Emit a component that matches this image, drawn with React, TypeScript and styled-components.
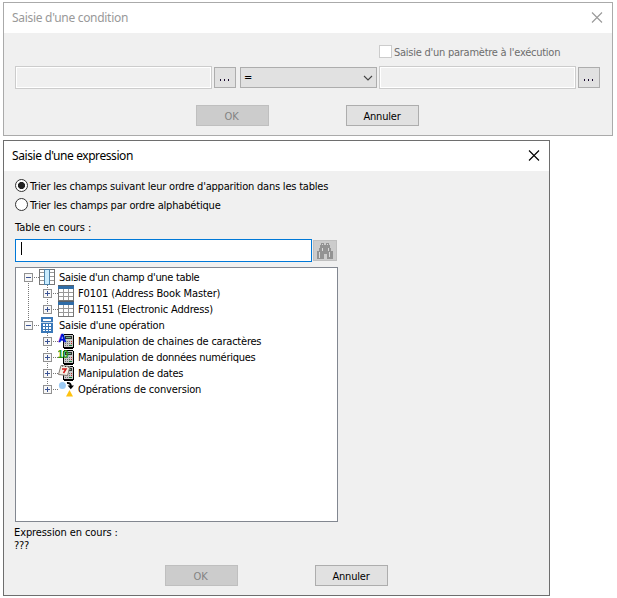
import React from 'react';
import styled, { createGlobalStyle, css } from 'styled-components';

const GlobalStyle = createGlobalStyle`
  body {
    margin: 0;
    background: #fff;
    overflow: hidden;
    font: 11px/13px 'DejaVu Sans Condensed', 'DejaVu Sans', sans-serif;
    color: #000;
  }
  * { box-sizing: border-box; }
`;

const Desktop = styled.main`
  display: flex;
  flex-direction: column;
  align-items: flex-start;
  gap: 4px;
  padding: 2px 0 0 3px;
  width: 617px;
  height: 598px;
`;

const Dialog = styled.section<{ $width: number; $height: number; $inactive?: boolean }>`
  display: flex;
  flex-direction: column;
  width: ${p => p.$width}px;
  height: ${p => p.$height}px;
  background: #f0f0f0;
  border: 1px solid ${p => (p.$inactive ? '#aaa' : '#6e6e6e')};
`;

const TitleBar = styled.header<{ $inactive?: boolean }>`
  display: flex;
  flex: none;
  align-items: center;
  justify-content: space-between;
  height: 30px;
  padding: 0 9px 0 8px;
  background: #fff;
  color: ${p => (p.$inactive ? '#999' : '#000')};
  font: 12px/16px 'Noto Sans', 'Open Sans', sans-serif;
`;

const Text = styled.span<{ $track?: number }>`
  letter-spacing: ${p => p.$track ?? -0.2}px;
  white-space: pre;
`;

const ConditionBody = styled.div`
  display: flex;
  flex-direction: column;
  padding: 12px 0 0 11px;
`;

const OptionText = styled(Text)`
  padding-top: 1px;
`;

const ParameterOption = styled.label`
  display: flex;
  align-items: center;
  gap: 2px;
  margin-left: 364px;
  height: 13px;
  color: #6d6d6d;
`;

const CheckBox = styled.span`
  width: 13px;
  height: 13px;
  border: 1px solid #ccc;
  background: #fff;
`;

const CriteriaRow = styled.div`
  display: grid;
  grid-template-columns: 197px 22px 139px 197px 22px;
  column-gap: 2px;
  align-items: center;
  margin-top: 8px;
  height: 23px;
`;

const DisabledInput = styled.div`
  height: 23px;
  border: 1px solid #ccc;
  box-shadow: inset 0 0 0 1px #fff;
`;

const surface = css`
  border: 1px solid #adadad;
  background: #e1e1e1;
`;

const DotsButton = styled.button`
  ${surface}
  display: flex;
  align-items: center;
  justify-content: center;
  height: 21px;
  padding: 0;
`;

const Select = styled.div`
  ${surface}
  display: flex;
  align-items: center;
  justify-content: space-between;
  height: 21px;
  margin-left: 2px;
  padding: 0 3px;
`;

const Actions = styled.div<{ $left: number; $top: number }>`
  display: flex;
  gap: 77px;
  margin: ${p => p.$top}px 0 0 ${p => p.$left}px;
`;

const PushButton = styled.button`
  ${surface}
  width: 73px;
  height: 21px;
  padding: 2px 1px 0 0;
  font: inherit;
  color: #000;
  &:disabled {
    background: #ccc;
    border-color: #bfbfbf;
    color: #838383;
    padding-right: 2px;
  }
`;

const ExpressionBody = styled.div`
  display: flex;
  flex-direction: column;
  padding: 8px 0 0 11px;
`;

const RadioOption = styled.label`
  display: flex;
  align-items: center;
  gap: 2px;
  height: 13px;
  margin-bottom: 6px;
`;

const RadioMark = styled.span<{ $checked?: boolean }>`
  width: 13px;
  height: 13px;
  border: 1px solid #333;
  border-radius: 50%;
  background: ${p => (p.$checked ? 'radial-gradient(circle, #222 0 3.2px, #fff 3.9px)' : '#fff')};
`;

const FieldLabel = styled.div`
  margin: 4px 0 0;
  height: 18px;
`;

const SearchRow = styled.div`
  display: flex;
  align-items: center;
  gap: 1px;
  height: 23px;
`;

const ActiveInput = styled.div`
  display: flex;
  width: 297px;
  height: 23px;
  padding: 2px 5px;
  border: 1px solid #0078d7;
  background: #fff;
`;

const Caret = styled.span`
  width: 1px;
  height: 13px;
  background: #000;
`;

const SearchButton = styled.button`
  display: flex;
  align-items: center;
  justify-content: center;
  width: 24px;
  height: 21px;
  padding: 0;
  border: 1px solid #bfbfbf;
  background: #ccc;
`;

const Tree = styled.ul`
  width: 323px;
  height: 255px;
  margin: 5px 0 0;
  padding: 1px 0 0;
  border: 1px solid #828790;
  background: #fff;
  list-style: none;
`;

const TreeRow = styled.li`
  display: flex;
  align-items: center;
  height: 16px;
  svg { display: block; flex: none; }
`;

const TreeLabel = styled(Text)`
  margin-left: 4px;
`;

const Summary = styled.div`
  margin: 4px 0 0 -1px;
  line-height: 13px;
`;

const CloseIcon = ({ color }: { color: string }) => (
  <svg width="12" height="12" viewBox="0 0 12 12">
    <path d="M1 0.5L11 10.5M11 0.5L1 10.5" stroke={color} strokeWidth="1.1" fill="none" />
  </svg>
);

const DotsIcon = () => (
  <svg width="12" height="8" shapeRendering="crispEdges" fill="#1a0a30">
    <rect x="1" y="5" width="1" height="2" />
    <rect x="5" y="5" width="1" height="2" />
    <rect x="9" y="5" width="1" height="2" />
  </svg>
);

const ChevronIcon = () => (
  <svg width="10" height="6" viewBox="0 0 10 6">
    <path d="M1 1L5 5L9 1" fill="none" stroke="#444" strokeWidth="1.1" />
  </svg>
);

const BinocularsIcon = () => (
  <svg width="16" height="16" shapeRendering="crispEdges">
    <path
      fill="#939393"
      d="M4 0h3v2h2V0h3v2h1v3h1v3h2v8h-6v-5H7v5H0V8h2V5h1V2h1z"
    />
    <path fill="#d8d8d8" d="M5 1h1v1H5zM10 1h1v1h-1zM5 5h1v3H5zM11 5h1v3h-1zM2 9h1v6H2zM12 9h1v5h-1z" />
    <path fill="#ccc" d="M7 11h2v5H7z" />
  </svg>
);

const TableIcon = () => (
  <svg width="16" height="16" shapeRendering="crispEdges">
    <path fill="#fff" d="M0 0h16v16H0z" />
    <path fill="#777" d="M0 0h1v16H0zM15 0h1v16h-1zM0 15h16v1H0z" />
    <path fill="#999" d="M1 7h14v1H1zM1 11h14v1H1zM5 4h1v11H5zM10 4h1v11h-1z" />
    <path fill="#2f6da8" d="M0 0h16v4H0z" />
    <path fill="#555f6a" d="M0 0h16v1H0z" />
  </svg>
);

const ColumnIcon = () => (
  <svg width="16" height="16" shapeRendering="crispEdges">
    <path fill="#fff" d="M0 0h16v16H0z" />
    <path fill="#777" d="M0 0h16v1H0zM0 15h16v1H0zM0 0h1v16H0zM15 0h1v16h-1z" />
    <path fill="#999" d="M1 3h14v1H1zM1 7h14v1H1zM1 11h14v1H1z" />
    <path fill="#c8ecff" d="M5 1h6v14H5z" />
    <path fill="#4f83aa" d="M5 0h1v16H5zM10 0h1v16h-1zM5 0h6v1H5zM5 15h6v1H5z" />
  </svg>
);

const CalculatorIcon = () => (
  <svg width="16" height="16" shapeRendering="crispEdges">
    <path fill="#3a78b8" d="M2 0h12v16H2z" />
    <path fill="#fff" d="M4 2h8v2H4zM4 7h2v2H4zM7 7h2v2H7zM10 7h2v2h-2zM4 10h2v2H4zM7 10h2v2H7zM10 10h2v2h-2zM4 13h2v1H4zM7 13h2v1H7zM10 13h2v1h-2z" />
    <path fill="#c5d8ea" d="M2 5h12v1H2z" />
  </svg>
);

const PocketCalculator = () => (
  <g shapeRendering="crispEdges">
    <path fill="#000" d="M6 1h9v1h1v13h-1v1H6v-1H5V2h1z" />
    <path fill="#c9c9c9" d="M6 2h9v12H6z" />
    <path fill="#333" d="M7 3h7v3H7z" />
    <path fill="#6fae88" d="M8 4h5v1H8z" />
    <path fill="#707070" d="M7 8h1v1H7zM9 8h1v1H9zM11 8h1v1h-1zM7 10h1v1H7zM9 10h1v1H9zM11 10h1v1h-1zM7 12h1v1H7zM9 12h1v1H9z" />
    <path fill="#b72525" d="M13 8h1v1h-1zM13 10h1v1h-1z" />
    <path fill="#1c7a3a" d="M11 12h3v1h-3z" />
  </g>
);

const TextFunctionIcon = () => (
  <svg width="16" height="16">
    <PocketCalculator />
    <text x="0.3" y="9" fontFamily="Liberation Sans" fontSize="11" fontWeight="700" fill="#0010d8" stroke="#0010d8" strokeWidth="0.4">A</text>
  </svg>
);

const NumberFunctionIcon = () => (
  <svg width="16" height="16">
    <PocketCalculator />
    <text x="-0.8" y="9" fontFamily="Liberation Sans" fontSize="11" fontWeight="700" letterSpacing="-0.8" fill="#2a9a10">10</text>
  </svg>
);

const DateFunctionIcon = () => (
  <svg width="16" height="16">
    <PocketCalculator />
    <path d="M3 0.5L12 1.5L9.5 10.5L0.5 9.5Z" fill="#f5efe4" stroke="#827b74" />
    <path d="M4 4h4L5.5 8" fill="none" stroke="#d01818" strokeWidth="1.5" />
    <path d="M4 1h1M7 1.5h1M10 2h1" stroke="#333" />
  </svg>
);

const ConversionIcon = () => (
  <svg width="16" height="16">
    <circle cx="4.4" cy="4.5" r="3.5" fill="#9ccaf4" />
    <path d="M9 2Q12.6 1.4 12.8 5" fill="none" stroke="#000" strokeWidth="2" />
    <path d="M9.6 4.5H16L12.8 8.3Z" fill="#000" />
    <path d="M11.5 9L15 15.5H8Z" fill="#ffc20e" />
  </svg>
);

interface BranchProps {
  level: 0 | 1;
  open?: boolean;
  first?: boolean;
  last?: boolean;
  trunk?: boolean;
}

/** Dotted connectors and the expand box that precede a tree node. */
const Branch = ({ level, open, first, last, trunk }: BranchProps) => {
  const x = level === 0 ? 12 : 31;
  const width = level === 0 ? 23 : 42;
  const dots = { stroke: '#777', strokeDasharray: '1 1', fill: 'none' };
  return (
    <svg width={width} height="16" shapeRendering="crispEdges">
      {trunk && <path d="M12.5 0V16" {...dots} />}
      {!first && <path d={`M${x + 0.5} 0V4`} {...dots} />}
      {!last && <path d={`M${x + 0.5} 12V16`} {...dots} />}
      <path d={`M${x + 6} 8.5H${width}`} {...dots} />
      <rect x={x - 3.5} y="4.5" width="8" height="8" fill="#f7f7f7" stroke="#919191" />
      <path d={`M${x - 2} 8.5h5`} stroke="#3b5394" />
      {!open && <path d={`M${x + 0.5} 6v5`} stroke="#3b5394" />}
    </svg>
  );
};

interface TreeNode extends BranchProps {
  label: string;
  icon: React.ReactElement;
  track: number;
}

const nodes: TreeNode[] = [
  { label: "Saisie d'un champ d'une table", icon: <ColumnIcon />, level: 0, open: true, first: true, track: -0.32 },
  { label: 'F0101 (Address Book Master)', icon: <TableIcon />, level: 1, trunk: true, track: -0.13 },
  { label: 'F01151 (Electronic Address)', icon: <TableIcon />, level: 1, trunk: true, last: true, track: -0.16 },
  { label: "Saisie d'une opération", icon: <CalculatorIcon />, level: 0, open: true, last: true, track: -0.23 },
  { label: 'Manipulation de chaines de caractères', icon: <TextFunctionIcon />, level: 1, track: -0.22 },
  { label: 'Manipulation de données numériques', icon: <NumberFunctionIcon />, level: 1, track: -0.28 },
  { label: 'Manipulation de dates', icon: <DateFunctionIcon />, level: 1, track: -0.23 },
  { label: 'Opérations de conversion', icon: <ConversionIcon />, level: 1, last: true, track: -0.16 },
];

const ConditionDialog = () => (
  <Dialog $width={610} $height={134} $inactive>
    <TitleBar $inactive>
      <Text $track={-0.3}>Saisie d'une condition</Text>
      <CloseIcon color="#999" />
    </TitleBar>
    <ConditionBody>
      <ParameterOption>
        <CheckBox />
        <OptionText $track={-0.25}>Saisie d'un paramètre à l'exécution</OptionText>
      </ParameterOption>
      <CriteriaRow>
        <DisabledInput />
        <DotsButton aria-label="Parcourir"><DotsIcon /></DotsButton>
        <Select>
          <Text>=</Text>
          <ChevronIcon />
        </Select>
        <DisabledInput />
        <DotsButton aria-label="Parcourir"><DotsIcon /></DotsButton>
      </CriteriaRow>
      <Actions $left={181} $top={16}>
        <PushButton disabled><Text>OK</Text></PushButton>
        <PushButton><Text>Annuler</Text></PushButton>
      </Actions>
    </ConditionBody>
  </Dialog>
);

const ExpressionDialog = () => (
  <Dialog $width={547} $height={456}>
    <TitleBar>
      <Text $track={-0.42}>Saisie d'une expression</Text>
      <CloseIcon color="#000" />
    </TitleBar>
    <ExpressionBody>
      <RadioOption>
        <RadioMark $checked />
        <OptionText $track={-0.21}>Trier les champs suivant leur ordre d'apparition dans les tables</OptionText>
      </RadioOption>
      <RadioOption>
        <RadioMark />
        <OptionText $track={-0.18}>Trier les champs par ordre alphabétique</OptionText>
      </RadioOption>
      <FieldLabel><Text $track={-0.08}>Table en cours :</Text></FieldLabel>
      <SearchRow>
        <ActiveInput><Caret /></ActiveInput>
        <SearchButton disabled aria-label="Rechercher"><BinocularsIcon /></SearchButton>
      </SearchRow>
      <Tree>
        {nodes.map(({ label, icon, track, ...branch }) => (
          <TreeRow key={label}>
            <Branch {...branch} />
            {icon}
            <TreeLabel $track={track}>{label}</TreeLabel>
          </TreeRow>
        ))}
      </Tree>
      <Summary>
        <div><Text $track={-0.1}>Expression en cours :</Text></div>
        <div><Text>???</Text></div>
      </Summary>
      <Actions $left={150} $top={13}>
        <PushButton disabled><Text>OK</Text></PushButton>
        <PushButton><Text>Annuler</Text></PushButton>
      </Actions>
    </ExpressionBody>
  </Dialog>
);

export default function App() {
  return (
    <Desktop>
      <GlobalStyle />
      <ConditionDialog />
      <ExpressionDialog />
    </Desktop>
  );
}
